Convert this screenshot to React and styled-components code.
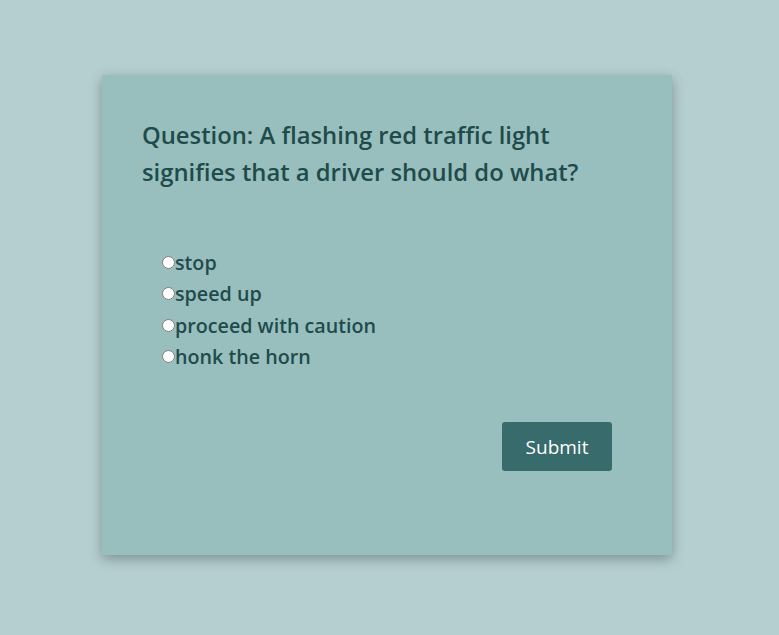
import React, { useState } from "react";
import styled, { createGlobalStyle } from "styled-components";

const GlobalStyle = createGlobalStyle`
  body {
    margin: 0;
    background: #b5cfd0;
    font-family: "Open Sans", "Liberation Sans", sans-serif;
  }
`;

const Page = styled.div`
  min-height: 635px;
  padding: 75px 0 0 102px;
  box-sizing: border-box;
`;

const Card = styled.div`
  width: 570px;
  height: 480px;
  box-sizing: border-box;
  background: #98bfbe;
  box-shadow: 0 4px 12px rgba(0, 0, 0, 0.3);
  padding: 42px 60px 0 40px;
  display: flex;
  flex-direction: column;
`;

const Question = styled.h2`
  margin: 0;
  font-size: 23.8px;
  font-weight: 600;
  line-height: 37px;
  color: #1f4b4b;
  max-width: 440px;
`;

const Options = styled.div`
  margin-top: 56px;
  padding-left: 20px;
  display: flex;
  flex-direction: column;
`;

const Option = styled.label`
  display: flex;
  align-items: center;
  height: 31.3px;
  font-size: 19.7px;
  font-weight: 600;
  color: #1f4b4b;
  cursor: pointer;
`;

const Radio = styled.input`
  margin: 0;
  width: 13px;
  height: 13px;
`;

const Actions = styled.div`
  margin-top: 50px;
  display: flex;
  justify-content: flex-end;
`;

const SubmitButton = styled.button`
  width: 110px;
  height: 49px;
  border: none;
  border-radius: 3px;
  background: #386b6b;
  color: #ffffff;
  font-family: inherit;
  font-size: 19px;
  font-weight: 500;
  cursor: pointer;
`;

const answers = ["stop", "speed up", "proceed with caution", "honk the horn"];

const App = () => {
  const [choice, setChoice] = useState("");

  return (
    <Page>
      <GlobalStyle />
      <Card>
        <Question>
          Question: A flashing red traffic light signifies that a driver should do what?
        </Question>
        <Options>
          {answers.map((a) => (
            <Option key={a}>
              <Radio
                type="radio"
                name="answer"
                value={a}
                checked={choice === a}
                onChange={() => setChoice(a)}
              />
              {a}
            </Option>
          ))}
        </Options>
        <Actions>
          <SubmitButton type="button">Submit</SubmitButton>
        </Actions>
      </Card>
    </Page>
  );
};

export default App;
